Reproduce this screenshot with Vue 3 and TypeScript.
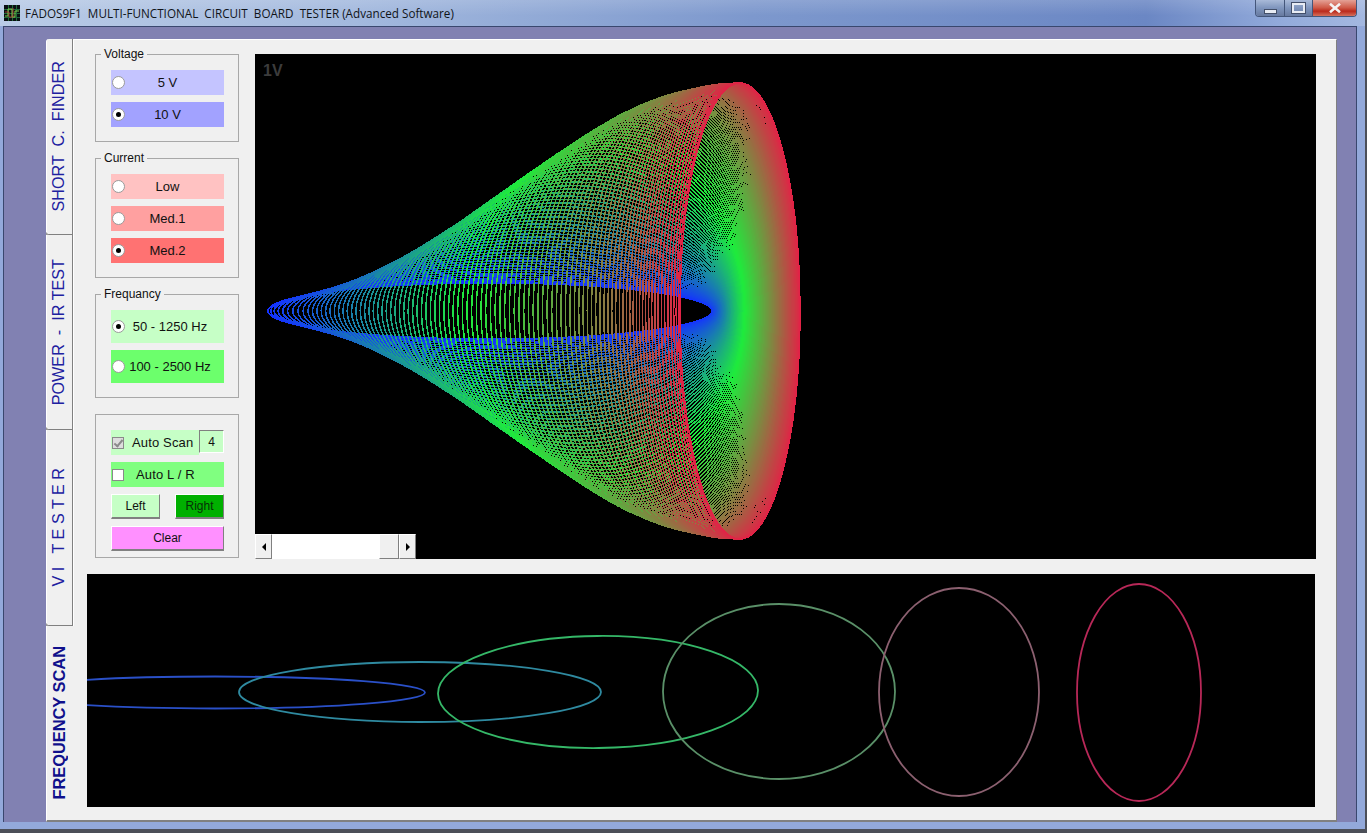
<template>
  <div class="screen">
    <div class="window">
      <!-- Title bar -->
      <header class="titlebar">
        <svg class="app-icon" viewBox="0 0 16 16">
          <rect width="16" height="16" fill="#0a0f12" />
          <path d="M0 4.5H16M0 8.5H16M0 12.5H16M4.5 0V16M8.5 0V16M12.5 0V16" stroke="#1f6a3a" stroke-width="1" />
          <path d="M1 11H4V4H8V12H11V6H15" fill="none" stroke="#7fd04a" stroke-width="1" />
          <path d="M1 7H5V12H9V3" fill="none" stroke="#c04040" stroke-width="0.8" />
        </svg>
        <span class="title-text">{{ title }}</span>
        <div class="caption-buttons">
          <div class="cap-btn cap-min"><span></span></div>
          <div class="cap-btn cap-max"><span></span></div>
          <div class="cap-btn cap-close">
            <svg viewBox="0 0 12 10" width="12" height="10">
              <path d="M1 0.8L11 9.2M11 0.8L1 9.2" stroke="#f4f4f4" stroke-width="2.6" />
            </svg>
          </div>
        </div>
      </header>

      <div class="client">
        <!-- Side tabs -->
        <nav class="tabs">
          <div v-for="tab in tabs" :key="tab.label" class="tab" :class="{ active: tab.active }">
            <span class="tab-label">{{ tab.label }}</span>
          </div>
        </nav>

        <main class="panel">
          <section class="top-row">
            <aside class="controls">
              <fieldset class="group">
                <legend>Voltage</legend>
                <label v-for="o in voltages" :key="o.label" class="opt" :style="{ background: o.color }">
                  <input v-model="voltage" type="radio" :value="o.label" />
                  <span>{{ o.label }}</span>
                </label>
              </fieldset>

              <fieldset class="group">
                <legend>Current</legend>
                <label v-for="o in currents" :key="o.label" class="opt" :style="{ background: o.color }">
                  <input v-model="current" type="radio" :value="o.label" />
                  <span>{{ o.label }}</span>
                </label>
              </fieldset>

              <fieldset class="group">
                <legend>Frequancy</legend>
                <label v-for="o in frequencies" :key="o.label" class="opt tall" :style="{ background: o.color }">
                  <input v-model="frequency" type="radio" :value="o.label" />
                  <span>{{ o.label }}</span>
                </label>
              </fieldset>

              <fieldset class="group plain">
                <div class="scan-row">
                  <label class="check scan-check">
                    <input type="checkbox" class="disabled" checked />
                    <span>Auto Scan</span>
                  </label>
                  <div class="scan-count">4</div>
                </div>
                <label class="check lr-check">
                  <input type="checkbox" />
                  <span>Auto L / R</span>
                </label>
                <div class="btn-row">
                  <button class="btn left-btn">Left</button>
                  <button class="btn right-btn">Right</button>
                </div>
                <button class="btn clear-btn">Clear</button>
              </fieldset>
            </aside>

            <div class="scope">
              <span class="scale">1V</span>
              <svg class="scope-svg" viewBox="255 54 1061 505">
                <ellipse
                  v-for="(c, i) in sweep"
                  :key="i"
                  :cx="c.cx"
                  cy="311"
                  :rx="c.rx"
                  :ry="c.ry"
                  :stroke="c.color"
                  fill="none"
                  stroke-width="1.5"
                  shape-rendering="crispEdges"
                />
              </svg>
              <!-- Scrollbar sits over the scope -->
              <div class="scrollbar">
                <div class="sb-btn"><i class="arrow-left"></i></div>
                <div class="sb-track"></div>
                <div class="sb-thumb"></div>
                <div class="sb-btn"><i class="arrow-right"></i></div>
              </div>
            </div>
          </section>

          <section class="scan-scope">
            <svg class="scope-svg" viewBox="87 574 1228 233">
              <ellipse
                v-for="s in samples"
                :key="s.color"
                :cx="s.cx"
                :cy="s.cy"
                :rx="s.rx"
                :ry="s.ry"
                :stroke="s.color"
                :transform="`rotate(${s.tilt} ${s.cx} ${s.cy})`"
                fill="none"
                stroke-width="1.8"
              />
            </svg>
          </section>
        </main>
      </div>
    </div>
  </div>
</template>

<script setup lang="ts">
import { ref } from 'vue'

const title = 'FADOS9F1  MULTI-FUNCTIONAL  CIRCUIT  BOARD  TESTER (Advanced Software)'

const tabs = [
  { label: 'SHORT  C.  FINDER', active: false },
  { label: 'POWER  -  IR TEST', active: false },
  { label: 'V I   T E S T E R', active: false },
  { label: 'FREQUENCY SCAN', active: true },
]

const voltages = [
  { label: '5 V', color: '#c4c4ff' },
  { label: '10 V', color: '#a2a2ff' },
]
const currents = [
  { label: 'Low', color: '#ffc2c2' },
  { label: 'Med.1', color: '#ffa0a0' },
  { label: 'Med.2', color: '#ff7272' },
]
const frequencies = [
  { label: '50 - 1250 Hz', color: '#c6ffc6' },
  { label: '100 - 2500 Hz', color: '#6cff6c' },
]

const voltage = ref('10 V')
const current = ref('Med.2')
const frequency = ref('50 - 1250 Hz')

// left edge, right edge and half height of the trace along the sweep (0..1)
const stops = [
  [268, 712, 28],
  [312, 718, 50],
  [355, 725, 80],
  [398, 732, 114],
  [442, 740, 148],
  [488, 750, 178],
  [535, 760, 202],
  [580, 770, 216],
  [620, 780, 223],
  [652, 790, 227],
  [680, 800, 228],
]

// Catmull-Rom through the stops so the envelope has no kinks
function sample(s: number, col: number) {
  const i = Math.min(Math.floor(s * 10), 9)
  const t = s * 10 - i
  const p0 = stops[Math.max(i - 1, 0)][col]
  const p1 = stops[i][col]
  const p2 = stops[i + 1][col]
  const p3 = stops[Math.min(i + 2, 10)][col]
  return (
    0.5 *
    (2 * p1 + (p2 - p0) * t + (2 * p0 - 5 * p1 + 4 * p2 - p3) * t * t + (3 * p1 - p0 - 3 * p2 + p3) * t * t * t)
  )
}

function traceColor(s: number) {
  const blue = [20, 50, 255]
  const green = [30, 235, 60]
  const red = [225, 35, 70]
  const [a, b, t] = s < 0.45 ? [blue, green, s / 0.45] : [green, red, (s - 0.45) / 0.55]
  const mix = a.map((v, i) => Math.round(v + (b[i] - v) * t))
  return `rgb(${mix.join(',')})`
}

const sweep = Array.from({ length: 100 }, (_, i) => {
  const s = i / 99
  const l = sample(s, 0)
  const r = sample(s, 1)
  return { cx: (l + r) / 2, rx: (r - l) / 2, ry: sample(s, 2), color: traceColor(s) }
})

const samples = [
  { cx: 215, cy: 692.5, rx: 210, ry: 16, tilt: 0, color: '#2a50c8' },
  { cx: 420, cy: 692, rx: 181, ry: 30, tilt: 0, color: '#2f8aa0' },
  { cx: 598, cy: 692, rx: 160, ry: 56, tilt: -0.6, color: '#35b868' },
  { cx: 779, cy: 691.5, rx: 116, ry: 87.5, tilt: 0, color: '#5a9068' },
  { cx: 959, cy: 692, rx: 80, ry: 104, tilt: 0, color: '#8c6070' },
  { cx: 1139, cy: 692.5, rx: 62, ry: 108.5, tilt: 0, color: '#b82858' },
]
</script>

<style>
html,
body {
  margin: 0;
  overflow: hidden;
  background: #4c4f58;
}
</style>

<style scoped>
.screen {
  width: 1367px;
  height: 833px;
  background: #4c4f58;
  font-family: "Liberation Sans", Arial, sans-serif;
  color: #111;
}
.window {
  width: 1365px;
  height: 829px;
  padding: 0 8px 7px 3px;
  box-sizing: border-box;
  display: flex;
  flex-direction: column;
  background: #93a9da;
}

/* Title bar */
.titlebar {
  height: 26px;
  margin: 0 -8px 0 -3px;
  padding-left: 4px;
  flex: none;
  display: flex;
  align-items: center;
  gap: 5px;
  position: relative;
  background:
    linear-gradient(180deg, rgba(255, 255, 255, 0.14), rgba(255, 255, 255, 0) 60%),
    linear-gradient(90deg, #b9cbe6 0, #a3b9de 26%, #7d98cd 55%, #6b87c4 84%, #93abdb 94%, #a4b8e0 100%);
}
.app-icon {
  width: 16px;
  height: 16px;
  flex: none;
}
.title-text {
  font-family: "Open Sans", sans-serif;
  font-size: 11.7px;
  white-space: pre;
  color: #101418;
}
.caption-buttons {
  position: absolute;
  top: 0;
  left: 1255px;
  width: 102px;
  height: 17px;
  display: flex;
  border: 1px solid #44567a;
  border-top: none;
  border-radius: 0 0 4px 4px;
  box-sizing: border-box;
  overflow: hidden;
}
.cap-btn {
  display: flex;
  align-items: center;
  justify-content: center;
  border-right: 1px solid #44567a;
  background: linear-gradient(180deg, #a9bad8, #7f95bd 50%, #67799f);
}
.cap-min {
  width: 28px;
}
.cap-min span {
  width: 11px;
  height: 3px;
  margin-top: 6px;
  background: #e8ecf4;
  border: 1px solid #44506a;
}
.cap-max {
  width: 27px;
}
.cap-max span {
  width: 9px;
  height: 6px;
  border: 2px solid #e8ecf4;
  outline: 1px solid #44506a;
}
.cap-close {
  flex: 1;
  border-right: none;
  background: linear-gradient(180deg, #e4a196, #cf5a48 48%, #bb2a1c 70%, #d5705c);
}

/* Client area */
.client {
  flex: 1;
  min-height: 0;
  display: flex;
  padding: 12px 19px 0 42px;
  background: #8181b2;
  border: 1px solid #39476e;
  border-bottom: none;
}
.tabs {
  width: 27px;
  flex: none;
  display: flex;
  flex-direction: column;
}
.tab {
  flex: 1;
  position: relative;
  display: flex;
  align-items: center;
  justify-content: center;
  background: #f0f0f0;
  border-right: 1px solid #808080;
  border-bottom: 1px solid #808080;
  border-left: 1px solid #fff;
  box-sizing: border-box;
}
.tab:first-child {
  border-top-left-radius: 3px;
}
.tab::after {
  content: "";
  position: absolute;
  left: -1px;
  bottom: -4px;
  border: 3px solid transparent;
  border-left: 3px solid #9a9a9a;
}
.tab.active {
  width: 28px;
  border-right: none;
  border-bottom: 2px solid #808080;
}
.tab.active::after {
  display: none;
}
.tab-label {
  writing-mode: vertical-rl;
  transform: rotate(180deg);
  white-space: pre;
  font-size: 16.2px;
  color: #2020a0;
  margin-left: -2px;
}
.tab.active .tab-label {
  font-size: 16.4px;
  font-weight: 700;
  color: #10108c;
}

.panel {
  flex: 1;
  min-width: 0;
  display: flex;
  flex-direction: column;
  padding: 7px 21px 13px 13px;
  background: #f0f0f0;
  border-top: 1px solid #fff;
  border-left: 1px solid #fff;
  border-right: 1px solid #808080;
  border-bottom: 2px solid #808080;
  box-sizing: border-box;
}
.top-row {
  display: flex;
  gap: 16px;
  margin: 0 -1px 0 8px;
  height: 512px;
  flex: none;
}

/* Left controls */
.controls {
  width: 144px;
  flex: none;
  display: flex;
  flex-direction: column;
  gap: 9px;
}
.group {
  margin: 0;
  padding: 9px 14px 14px 15px;
  border: 1px solid #a8a8a8;
  display: flex;
  flex-direction: column;
  gap: 7px;
  min-width: 0;
}
.group legend {
  margin-left: -10px;
  padding: 0 3px;
  font-size: 12px;
  line-height: 14px;
}
.group.plain {
  margin-top: 7px;
  padding: 15px 14px 6px 15px;
}
.opt {
  height: 25px;
  display: grid;
  align-items: center;
  font-size: 13px;
}
.opt > * {
  grid-area: 1 / 1;
}
.opt span {
  justify-self: center;
}
.opt.tall {
  height: 33px;
}
.opt.tall span {
  padding-left: 5px;
}
input[type="radio"] {
  appearance: none;
  margin: 0 0 0 1px;
  width: 13px;
  height: 13px;
  justify-self: start;
  border-radius: 50%;
  border: 1px solid #9a9a9a;
  background: #fff;
  box-sizing: border-box;
  position: relative;
}
input[type="radio"]:checked::after {
  content: "";
  position: absolute;
  inset: 3px;
  border-radius: 50%;
  background: #000;
}
.check {
  height: 25px;
  display: flex;
  align-items: center;
  font-size: 13px;
  letter-spacing: 0.15px;
  box-sizing: border-box;
}
input[type="checkbox"] {
  appearance: none;
  margin: 0 0 0 1px;
  width: 12px;
  height: 12px;
  flex: none;
  border: 1px solid #8a8a8a;
  background: #fff;
  box-sizing: border-box;
  position: relative;
}
input[type="checkbox"].disabled {
  background: #ddd;
}
input[type="checkbox"].disabled::after {
  content: "";
  position: absolute;
  left: 3px;
  top: 0;
  width: 3px;
  height: 7px;
  border: solid #8a8a8a;
  border-width: 0 2px 2px 0;
  transform: rotate(40deg);
}
.scan-row {
  display: flex;
  height: 25px;
  background: linear-gradient(90deg, #c6ffc6 88px, transparent 88px);
}
.scan-check {
  width: 88px;
  flex: none;
}
.scan-check span {
  margin-left: 8px;
}
.scan-count {
  width: 25px;
  height: 23px;
  box-sizing: border-box;
  display: flex;
  align-items: center;
  justify-content: center;
  font-size: 12px;
  background: #c6ffc6;
  border: 1px solid #fff;
  border-top-color: #808080;
  border-left-color: #808080;
}
.lr-check {
  background: #80ff80;
}
.lr-check span {
  margin-left: 12px;
}
.btn-row {
  display: flex;
  justify-content: space-between;
}
.btn {
  height: 25px;
  padding: 0;
  font: 12px "Liberation Sans", Arial, sans-serif;
  color: #111;
  border: 1px solid #fff;
  border-right-color: #808080;
  border-bottom: 2px solid #808080;
  box-sizing: border-box;
}
.left-btn {
  width: 49px;
  background: #c6ffc6;
}
.right-btn {
  width: 49px;
  background: #00b000;
  color: #063006;
}
.clear-btn {
  background: #ff90ff;
}

/* Scopes */
.scope {
  flex: 1;
  margin-top: 7px;
  height: 505px;
  position: relative;
  background: #000;
  overflow: hidden;
}
.scope-svg {
  display: block;
  width: 100%;
  height: 100%;
}
.scale {
  position: absolute;
  left: 8px;
  top: 8px;
  font-size: 16px;
  font-weight: 700;
  color: #3c3c3c;
}
.scrollbar {
  position: absolute;
  left: 0;
  bottom: 0;
  width: 161px;
  height: 25px;
  display: flex;
}
.sb-btn {
  width: 17px;
  flex: none;
  display: flex;
  align-items: center;
  justify-content: center;
  background: #f0f0f0;
  border: 1px solid #fff;
  border-right-color: #808080;
  border-bottom-color: #808080;
  box-sizing: border-box;
}
.sb-track {
  flex: 1;
  background: #fff;
}
.sb-thumb {
  width: 20px;
  background: #f0f0f0;
  border: 1px solid #fff;
  border-right-color: #808080;
  border-bottom-color: #808080;
  box-sizing: border-box;
}
.arrow-left,
.arrow-right {
  border: 4px solid transparent;
}
.arrow-left {
  border-right: 4px solid #000;
  border-left: none;
}
.arrow-right {
  border-left: 4px solid #000;
  border-right: none;
}
.scan-scope {
  flex: 1;
  min-height: 0;
  margin-top: 15px;
  background: #000;
  overflow: hidden;
}
</style>
